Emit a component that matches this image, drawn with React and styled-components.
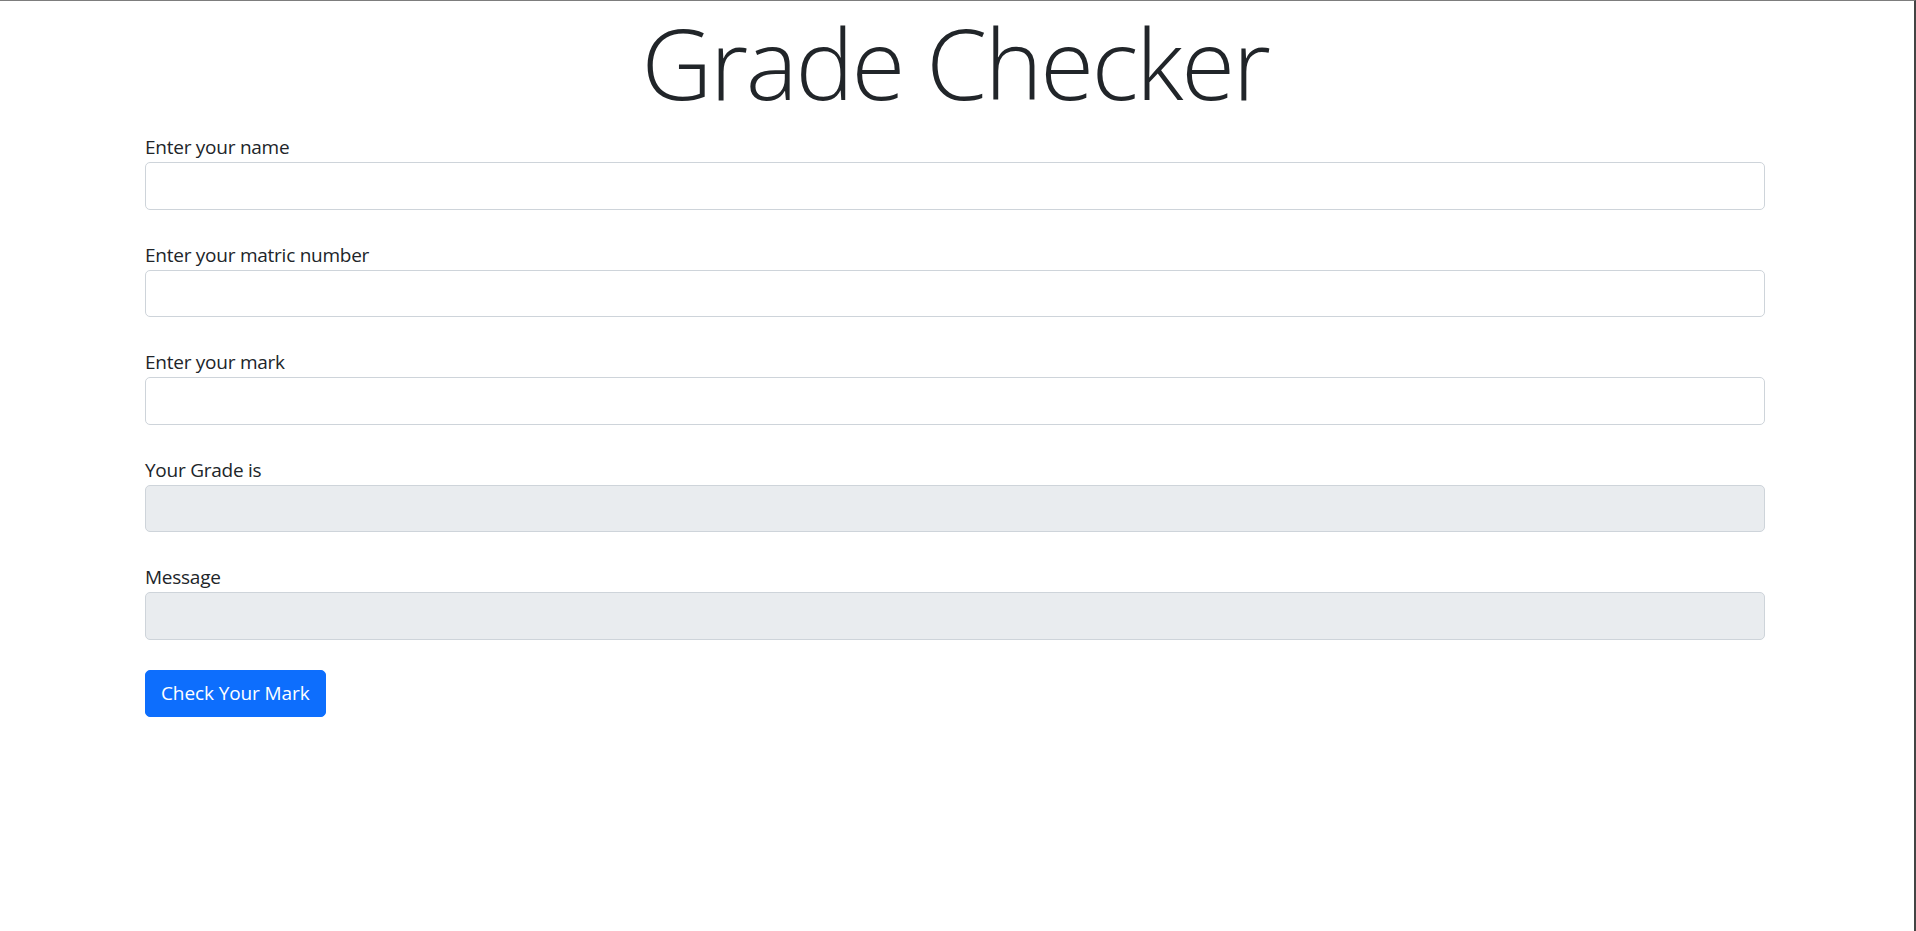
import React from "react";
import styled, { createGlobalStyle } from "styled-components";

const GlobalStyle = createGlobalStyle`
  *, *::before, *::after { box-sizing: border-box; }
  html, body { margin: 0; padding: 0; background: #fff; }
  body {
    font-family: "Open Sans", "Noto Sans", Arial, sans-serif;
    color: #212529;
  }
`;

const Frame = styled.div`
  min-height: 100vh;
  border-top: 1px solid #7d7d7d;
  border-right: 2px solid #444;
`;

const Container = styled.main`
  width: 1650px;
  margin-left: 130px;
  padding: 0 15px;
`;

const Title = styled.h1`
  margin: 0 0 10px;
  padding-top: 1px;
  text-align: center;
  font-size: 98px;
  font-weight: 300;
  line-height: 120px;
  letter-spacing: -2.3px;
  color: #212529;
`;

const Field = styled.div`
  margin-bottom: 30px;
`;

const Label = styled.label`
  display: block;
  font-size: 19px;
  line-height: 30px;
  letter-spacing: -0.25px;
  color: #212529;
`;

const Input = styled.input`
  display: block;
  width: 100%;
  height: 47.5px;
  padding: 7.5px 15px;
  font-family: inherit;
  font-size: 19px;
  color: #212529;
  background: ${(p) => (p.disabled ? "#e9ecef" : "#fff")};
  border: 1px solid #ced4da;
  border-radius: 5px;
  outline: none;
`;

const Button = styled.button`
  display: inline-block;
  padding: 7.5px 15px;
  font-family: inherit;
  font-size: 19px;
  line-height: 30px;
  letter-spacing: -0.1px;
  color: #fff;
  background: #0d6efd;
  border: 1px solid #0d6efd;
  border-radius: 5px;
  cursor: pointer;
`;

const fields = [
  { id: "name", label: "Enter your name" },
  { id: "matric", label: "Enter your matric number" },
  { id: "mark", label: "Enter your mark" },
  { id: "grade", label: "Your Grade is", disabled: true },
  { id: "message", label: "Message", disabled: true },
];

export default function App() {
  return (
    <>
      <GlobalStyle />
      <Frame>
        <Container>
          <Title>Grade Checker</Title>
          {fields.map((f) => (
            <Field key={f.id}>
              <Label htmlFor={f.id}>{f.label}</Label>
              <Input id={f.id} type="text" disabled={f.disabled} />
            </Field>
          ))}
          <Button type="button">Check Your Mark</Button>
        </Container>
      </Frame>
    </>
  );
}
